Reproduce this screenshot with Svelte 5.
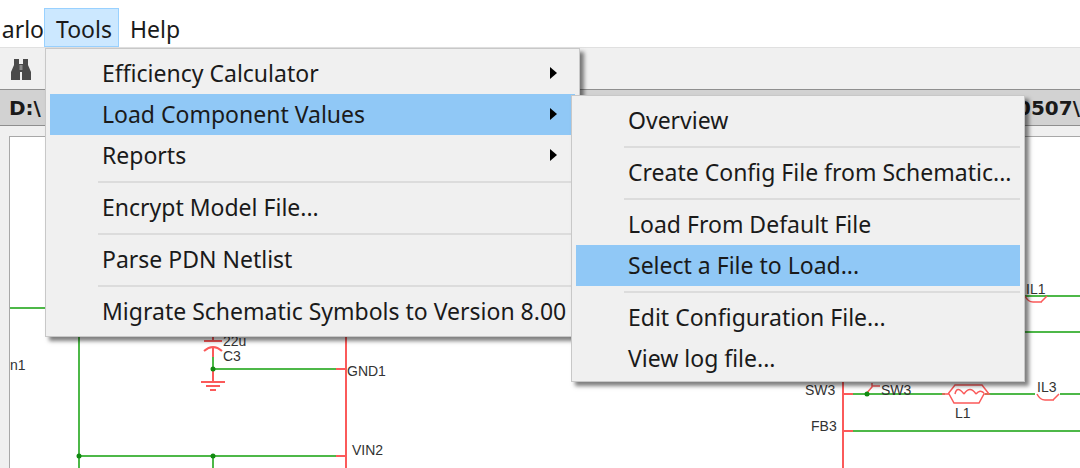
<script>
  const mainItems = [
    { label: 'Efficiency Calculator', arrow: true },
    { label: 'Load Component Values', arrow: true, active: true },
    { label: 'Reports', arrow: true },
    { sep: true },
    { label: 'Encrypt Model File...' },
    { sep: true },
    { label: 'Parse PDN Netlist' },
    { sep: true },
    { label: 'Migrate Schematic Symbols to Version 8.00' }
  ];
  const subItems = [
    { label: 'Overview' },
    { sep: true },
    { label: 'Create Config File from Schematic...' },
    { sep: true },
    { label: 'Load From Default File' },
    { label: 'Select a File to Load...', active: true },
    { sep: true },
    { label: 'Edit Configuration File...' },
    { label: 'View log file...' }
  ];
</script>

{#snippet rows(items, cls)}
  {#each items as item}
    {#if item.sep}
      <div class="sep"></div>
    {:else}
      <div class="row" class:active={item.active}>
        <span class={cls}>{item.label}</span>
        {#if item.arrow}<span class="arrow"></span>{/if}
      </div>
    {/if}
  {/each}
{/snippet}

<div class="window">
  <nav class="menubar">
    <span class="cut">arlo</span>
    <span class="top open">Tools</span>
    <span class="top">Help</span>
  </nav>

  <div class="toolbar">
    <svg class="binoculars" width="24" height="26" viewBox="0 0 24 26">
      <path d="M5 3h5v5h4V3h5v6l3 7v8h-9v-8h-2v8H2v-8l3-7z" fill="#4a4a4a" />
      <rect x="10.5" y="9" width="3" height="5" fill="#8a8a8a" />
    </svg>
  </div>

  <div class="pathbar">
    <span>D:\</span>
    <span>0507\</span>
  </div>

  <div class="canvas">
    <svg class="sheet" width="1070" height="331" viewBox="10 137 1070 331">
      <g fill="none" stroke="#4db848" stroke-width="2">
        <path d="M10 308h36M79 337v131M79 456h257M213 357v12M213 369h123M213 456v12" />
        <path d="M1010 296h70M1025 332h55M853 394h92M985 394h50M1060 394h20M853 431h227" />
      </g>
      <g fill="none" stroke="#fb5a5a" stroke-width="2">
        <path d="M346 337v131M336 369h10M336 456h10" />
        <path d="M843 382v86M843 394h10M843 431h10" />
        <path d="M204 341h18M213 337v4" />
        <path d="M204 351q9-8 18 0M213 347v10" />
        <path d="M213 369v12M201 382h24M206 386h14M210 390h6" />
        <path d="M866 394l6-7v-4M872 386h8" stroke-width="1.5" />
        <path d="M942 394h6l7-9h27l7 9h-5l-5 9h-25l-5-9h-5M955 394q2-9 9 0M964 394q6-9 12 0M976 394q4-5 8-1" stroke-width="1.5" />
        <path d="M1037 394q3 6 8 6h8l6-6M1045 400h9" stroke-width="1.5" />
        <path d="M1025 296q3 6 8 6h8l6-6M1033 302h9" stroke-width="1.5" />
      </g>
      <g fill="#118a11">
        <circle cx="213" cy="369" r="2.5" />
        <circle cx="79" cy="456" r="2.5" />
        <circle cx="213" cy="456" r="2.5" />
        <circle cx="867" cy="394" r="2.5" />
      </g>
      <g class="net">
        <text x="10" y="370">n1</text>
        <text x="223" y="346">22u</text>
        <text x="223" y="361">C3</text>
        <text x="347" y="376">GND1</text>
        <text x="352" y="455">VIN2</text>
        <text x="805" y="395">SW3</text>
        <text x="881" y="395">SW3</text>
        <text x="811" y="431">FB3</text>
        <text x="955" y="418">L1</text>
        <text x="1037" y="392">IL3</text>
        <text x="1026" y="294">IL1</text>
      </g>
    </svg>
  </div>

  <div class="popup main">
    {@render rows(mainItems, 'label')}
  </div>
  <div class="popup sub">
    {@render rows(subItems, 'label')}
  </div>
</div>

<style>
  :global(body) {
    margin: 0;
    background: #fff;
  }

  .window {
    position: relative;
    width: 1080px;
    height: 468px;
    overflow: hidden;
    display: flex;
    flex-direction: column;
    font-family: 'Noto Sans', 'Open Sans', sans-serif;
    color: #1a1a1a;
  }

  .menubar {
    height: 47px;
    flex: none;
    display: flex;
    align-items: flex-end;
    font-size: 23px;
    background: #fff;
    box-sizing: border-box;
    padding-left: 0;
  }

  .cut {
    width: 44px;
    height: 39px;
    line-height: 42px;
    overflow: hidden;
    direction: rtl;
    padding-right: 0;
  }

  .top {
    height: 39px;
    line-height: 42px;
    padding: 0 11px;
    box-sizing: border-box;
  }

  .top.open {
    width: 75px;
    background: #cce8ff;
    border: 1px solid #99d1ff;
    line-height: 40px;
  }

  .toolbar {
    height: 42px;
    flex: none;
    background: #f0f0f0;
    border-top: 1px solid #e0e0e0;
    box-sizing: border-box;
    display: flex;
    align-items: center;
    padding-left: 9px;
  }

  .pathbar {
    height: 37px;
    flex: none;
    background: #d2d2d2;
    border-top: 1px solid #8f8f8f;
    border-bottom: 1px solid #8f8f8f;
    box-sizing: border-box;
    display: flex;
    justify-content: space-between;
    align-items: center;
    padding: 0 0 0 9px;
    font-family: 'DejaVu Sans', sans-serif;
    font-weight: 700;
    font-size: 20px;
  }

  .canvas {
    flex: 1;
    background: #f0f0f0;
    padding: 10px 0 0 9px;
  }

  .sheet {
    display: block;
    background: #fff;
    border-top: 1px solid #a8a8a8;
    border-left: 1px solid #a8a8a8;
  }

  .net {
    font-family: 'Liberation Sans', sans-serif;
    font-size: 14px;
    fill: #333;
  }

  .popup {
    position: absolute;
    box-sizing: border-box;
    background: #f0f0f0;
    border: 1px solid #c8c8c8;
    box-shadow: 4px 4px 4px rgba(0, 0, 0, 0.5);
    padding: 4px;
    font-size: 23px;
  }

  .main {
    left: 45px;
    top: 48px;
    width: 535px;
    height: 289px;
  }

  .sub {
    left: 571px;
    top: 95px;
    width: 454px;
    height: 287px;
  }

  .row {
    position: relative;
    height: 41px;
    line-height: 41px;
    padding-left: 52px;
    white-space: nowrap;
  }

  .row.active {
    background: #90c8f6;
  }

  .arrow {
    position: absolute;
    right: 18px;
    top: 14px;
    border-left: 7px solid #000;
    border-top: 6px solid transparent;
    border-bottom: 6px solid transparent;
  }

  .sep {
    height: 11px;
    margin-left: 48px;
    position: relative;
  }

  .sep::after {
    content: '';
    position: absolute;
    left: 0;
    right: 0;
    top: 5px;
    height: 2px;
    background: #dcdcdc;
  }
</style>
